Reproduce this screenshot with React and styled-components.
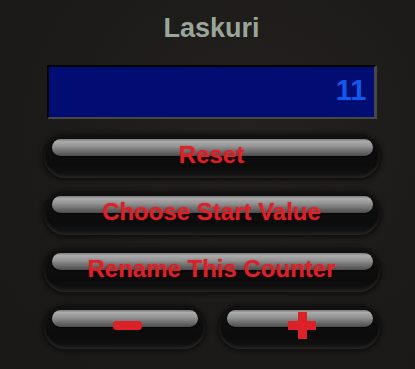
import React, { useState } from 'react';
import styled, { createGlobalStyle } from 'styled-components';

const GlobalStyle = createGlobalStyle`
  html, body {
    margin: 0;
    padding: 0;
    background: #1c1a18;
  }
`;

const Counter = () => {
  const [value, setValue] = useState(11);
  return (
    <Wrap>
      <GlobalStyle />
      <Title>Laskuri</Title>
      <Display>
        <Value>{value}</Value>
      </Display>
      <Buttons>
        <Button onClick={() => setValue(0)}>
          <Label>Reset</Label>
        </Button>
        <Button>
          <Label>Choose Start Value</Label>
        </Button>
        <Button>
          <Label>Rename This Counter</Label>
        </Button>
        <Pair>
          <Button onClick={() => setValue(value - 1)} $shift={3}>
            <Label>
              <svg width="29" height="9" viewBox="0 0 29 9">
                <rect x="0" y="0" width="29" height="9" rx="3.5" fill="#dc2129" />
              </svg>
            </Label>
          </Button>
          <Button onClick={() => setValue(value + 1)} $shift={3}>
            <Label>
              <svg width="28" height="27" viewBox="0 0 28 27">
                <path d="M10 0h9v9h9v9h-9v9h-9v-9H0V9h10z" fill="#dc2129" />
              </svg>
            </Label>
          </Button>
        </Pair>
      </Buttons>
    </Wrap>
  );
};

const Wrap = styled.div`
  width: 415px;
  height: 369px;
  box-sizing: border-box;
  padding-top: 12px;
  display: flex;
  flex-direction: column;
  align-items: center;
  font-family: 'Liberation Sans', Arial, sans-serif;
  background: radial-gradient(ellipse at 60% 35%, #23201e 0%, #1d1b19 55%, #191816 100%);
  overflow: hidden;
`;

const Title = styled.h1`
  margin: 0;
  font-size: 27px;
  line-height: 32px;
  font-weight: 700;
  color: #9aa59b;
  transform: translateX(4px);
`;

const Display = styled.div`
  margin-top: 21px;
  margin-left: 8px;
  width: 330px;
  height: 54px;
  box-sizing: border-box;
  border-style: solid;
  border-width: 2px 3px 2px 2px;
  border-color: #050505 #474747 #474747 #050505;
  background: #020d73;
  display: flex;
  align-items: center;
  justify-content: flex-end;
  padding: 0 7px 3px 0;
`;

const Value = styled.span`
  font-size: 29px;
  line-height: 1;
  font-weight: 700;
  color: #1158ee;
`;

const Buttons = styled.div`
  margin-top: 17px;
  margin-left: 8px;
  width: 336px;
  display: flex;
  flex-direction: column;
  gap: 15px;
`;

const Pair = styled.div`
  display: grid;
  grid-template-columns: 1fr 1fr;
  gap: 14px;
`;

const Button = styled.button`
  position: relative;
  isolation: isolate;
  height: 42px;
  width: 100%;
  border: none;
  border-radius: 21px;
  padding: 0 0 5px ${(p) => (p.$shift || 0) * 2}px;
  margin: 0;
  display: flex;
  align-items: center;
  justify-content: center;
  background: linear-gradient(#101010, #0b0b0b 70%, #141414);
  box-shadow: 0 0 0 1px #121110, 0 0 4px 2px #0e0d0c, inset 0 -2px 3px #262626;
  font-family: 'Liberation Sans', Arial, sans-serif;
  font-size: 24px;
  line-height: 37px;
  font-weight: 700;
  color: #dd2129;
  cursor: pointer;

  &::before {
    content: '';
    position: absolute;
    left: 8px;
    right: 7px;
    top: 3px;
    height: 17px;
    border-radius: 8.5px;
    background: linear-gradient(#7a7a7a 0%, #ababab 15%, #959595 42%, #6e6e6e 72%, #4c4c4c 100%);
    box-shadow: 0 1px 1px rgba(0, 0, 0, 0.6);
  }
`;

const Label = styled.span`
  position: relative;
  z-index: 1;
  display: flex;
  align-items: center;
  text-shadow: 0 0 2px rgba(200, 20, 30, 0.45);
`;

const App = () => <Counter />;

export default App;
